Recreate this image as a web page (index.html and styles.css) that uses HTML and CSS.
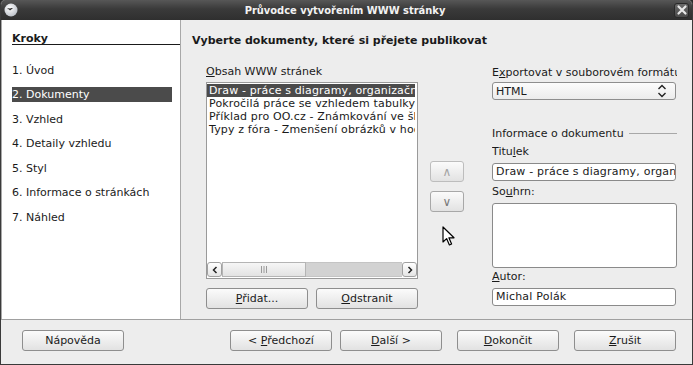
FILE: index.html
```html
<!DOCTYPE html>
<html lang="cs">
<head>
    <meta charset="UTF-8">
    <title>Průvodce vytvořením WWW stránky</title>
    <link rel="stylesheet" href="styles.css">
</head>
<body>
    <div class="window">
        <div class="titlebar">
            <svg class="app-icon" width="14" height="14" viewBox="0 0 14 14">
                <defs>
                    <radialGradient id="ball" cx="0.4" cy="0.35" r="0.7">
                        <stop offset="0" stop-color="#ffffff"/>
                        <stop offset="1" stop-color="#b9bec6"/>
                    </radialGradient>
                </defs>
                <circle cx="7" cy="7" r="6.5" fill="url(#ball)"/>
                <path d="M3 6 Q4.5 4.5 6 5.6 Q7.5 4.5 9 5.2 L7.2 6.4 L6 7.4 L4.8 6.3 Z" fill="#2a2a2a"/>
            </svg>
            <span class="title">Průvodce vytvořením WWW stránky</span>
            <span class="close">
                <svg width="12" height="12" viewBox="0 0 12 12">
                    <path d="M2.5 2.5 L9.5 9.5 M9.5 2.5 L2.5 9.5" stroke="#e8e8e8" stroke-width="2.2" stroke-linecap="round"/>
                </svg>
            </span>
        </div>

        <div class="main">
            <aside class="steps">
                <div class="steps-title">Kroky</div>
                <ul class="step-list">
                    <li>1. Úvod</li>
                    <li class="current">2. Dokumenty</li>
                    <li>3. Vzhled</li>
                    <li>4. Detaily vzhledu</li>
                    <li>5. Styl</li>
                    <li>6. Informace o stránkách</li>
                    <li>7. Náhled</li>
                </ul>
            </aside>

            <section class="page">
                <h2 class="page-title">Vyberte dokumenty, které si přejete publikovat</h2>

                <div class="columns">
                    <div class="col-list">
                        <div class="label"><u>O</u>bsah WWW stránek</div>
                        <div class="listbox">
                            <ul class="doc-list">
                                <li class="selected">Draw - práce s diagramy, organizačními diagramy</li>
                                <li>Pokročilá práce se vzhledem tabulky</li>
                                <li>Příklad pro OO.cz - Známkování ve školách</li>
                                <li>Typy z fóra - Zmenšení obrázků v hodnocení</li>
                            </ul>
                            <div class="hscroll">
                                <span class="scroll-btn">
                                    <svg width="6" height="8" viewBox="0 0 6 8"><path d="M4.5 1 L1.5 4 L4.5 7" fill="none" stroke="#222" stroke-width="1.5"/></svg>
                                </span>
                                <span class="scroll-thumb">
                                    <svg width="8" height="7" viewBox="0 0 8 7"><path d="M1.5 0 V7 M4 0 V7 M6.5 0 V7" stroke="#9a9a9a" stroke-width="1"/></svg>
                                </span>
                                <span class="scroll-trough"></span>
                                <span class="scroll-btn">
                                    <svg width="6" height="8" viewBox="0 0 6 8"><path d="M1.5 1 L4.5 4 L1.5 7" fill="none" stroke="#222" stroke-width="1.5"/></svg>
                                </span>
                            </div>
                        </div>
                        <div class="list-buttons">
                            <button class="btn"><u>P</u>řidat...</button>
                            <button class="btn"><u>O</u>dstranit</button>
                        </div>
                    </div>

                    <div class="col-move">
                        <button class="btn small disabled">&#8743;</button>
                        <button class="btn small">&#8744;</button>
                        <svg class="cursor" width="14" height="21" viewBox="0 0 14 21">
                            <path d="M1 1 L1 16 L4.6 12.6 L7.4 19 L9.6 18 L6.9 11.8 L12 11.8 Z" fill="#ffffff" stroke="#000000" stroke-width="1.2" stroke-linejoin="round"/>
                        </svg>
                    </div>

                    <div class="col-info">
                        <div class="label first">E<u>x</u>portovat v souborovém formátu</div>
                        <div class="select">
                            <span>HTML</span>
                            <svg width="10" height="14" viewBox="0 0 10 14"><path d="M1.5 5 L5 1.5 L8.5 5 M1.5 9 L5 12.5 L8.5 9" fill="none" stroke="#222" stroke-width="1.4"/></svg>
                        </div>
                        <div class="group-title"><span>Informace o dokumentu</span></div>
                        <div class="label">Titu<u>l</u>ek</div>
                        <div class="field">Draw - práce s diagramy, organizačními diagramy</div>
                        <div class="label">So<u>u</u>hrn:</div>
                        <div class="field area"></div>
                        <div class="label"><u>A</u>utor:</div>
                        <div class="field">Michal Polák</div>
                    </div>
                </div>
            </section>
        </div>

        <div class="footer">
            <button class="btn">Nápověda</button>
            <div class="nav-buttons">
                <button class="btn">&lt; <u>P</u>ředchozí</button>
                <button class="btn"><u>D</u>alší &gt;</button>
                <button class="btn wide-gap"><u>D</u>okončit</button>
                <button class="btn wide-gap"><u>Z</u>rušit</button>
            </div>
        </div>
    </div>
</body>
</html>
```

FILE: styles.css
```css
:root {
    --window-bg: #ededed;
    --border-color: #8e8e8e;
    --text-color: #1a1a1a;
    --selection-bg: #4b4b4b;
}

* {
    margin: 0;
    padding: 0;
    box-sizing: border-box;
}

body {
    background-color: #2b2b2b;
    font-family: 'DejaVu Sans', sans-serif;
    font-size: 11px;
    line-height: 15px;
    color: var(--text-color);
}

.window {
    width: 693px;
    height: 365px;
    background-color: var(--window-bg);
    border: 1px solid #3a3a3a;
    border-top: none;
    border-radius: 5px 5px 0 0;
    overflow: hidden;
    display: flex;
    flex-direction: column;
}

/* title bar */
.titlebar {
    height: 20px;
    flex: none;
    display: flex;
    align-items: center;
    padding: 0 3px 0 3px;
    background: linear-gradient(#575757, #3a3a3a 45%, #2f2f2f);
    color: #f2f2f2;
}

.app-icon {
    flex: none;
}

.title {
    flex: 1;
    text-align: center;
    font-family: 'DejaVu Sans Condensed', 'DejaVu Sans', sans-serif;
    font-weight: bold;
    font-size: 11px;
    padding-right: 2px;
}

.close {
    width: 15px;
    height: 15px;
    border-radius: 3px;
    background: linear-gradient(#6a6a6a, #4a4a4a);
    border: 1px solid #2a2a2a;
    display: flex;
    align-items: center;
    justify-content: center;
}

/* main area */
.main {
    height: 299px;
    flex: none;
    display: flex;
}

.steps {
    width: 180px;
    flex: none;
    background-color: white;
    border-left: 1px solid #a8a8a8;
    border-right: 1px solid #a8a8a8;
    padding: 13px 8px 0 10px;
}

.steps-title {
    font-weight: bold;
    line-height: 11px;
    margin-right: -8px;
    border-bottom: 1px solid #1a1a1a;
}

.step-list {
    list-style: none;
    margin-top: 17.5px;
}

.step-list li {
    height: 15px;
    line-height: 15px;
    margin-bottom: 9.5px;
}

.step-list li.current {
    background-color: var(--selection-bg);
    color: white;
}

.page {
    flex: 1;
    padding: 13px 0 0 11px;
}

.page-title {
    font-size: 11px;
    font-weight: bold;
    line-height: 15px;
}

.columns {
    display: flex;
    margin-top: 16px;
    margin-left: 14px;
}

.label {
    line-height: 15px;
    white-space: nowrap;
    overflow: hidden;
}

/* document list */
.col-list {
    width: 212px;
    flex: none;
}

.listbox {
    margin-top: 3px;
    height: 197px;
    background-color: white;
    border: 1px solid #9a9a9a;
    display: flex;
    flex-direction: column;
}

.doc-list {
    list-style: none;
    flex: 1;
    padding-top: 1px;
    overflow: hidden;
}

.doc-list li {
    height: 13px;
    line-height: 13px;
    padding-left: 2px;
    margin-right: 2px;
    letter-spacing: 0.15px;
    white-space: nowrap;
    overflow: hidden;
}

.doc-list li.selected {
    background-color: var(--selection-bg);
    color: white;
}

.hscroll {
    height: 15px;
    display: flex;
    margin: 0 0 1px 0;
}

.scroll-btn {
    width: 15px;
    flex: none;
    border: 1px solid #a0a0a0;
    border-radius: 3px;
    background: linear-gradient(#ffffff, #e4e4e4);
    display: flex;
    align-items: center;
    justify-content: center;
}

.scroll-thumb {
    width: 84px;
    flex: none;
    border: 1px solid #b4b4b4;
    background: linear-gradient(#f6f6f6, #e2e2e2);
    display: flex;
    align-items: center;
    justify-content: center;
}

.scroll-trough {
    flex: 1;
    background-color: #d2d2d2;
    border-top: 1px solid #c4c4c4;
    border-bottom: 1px solid #c4c4c4;
}

.list-buttons {
    display: flex;
    justify-content: space-between;
    margin-top: 9px;
}

.btn {
    width: 102px;
    height: 21px;
    font-family: 'DejaVu Sans', sans-serif;
    font-size: 11px;
    color: var(--text-color);
    border: 1px solid var(--border-color);
    border-radius: 3px;
    background: linear-gradient(#fbfbfb, #ececec 60%, #e2e2e2);
}

/* move up / down */
.col-move {
    width: 34px;
    flex: none;
    margin-left: 12px;
    padding-top: 97px;
    display: flex;
    flex-direction: column;
    gap: 9px;
    position: relative;
}

.btn.small {
    width: 34px;
    font-size: 12px;
    color: #7a7a7a;
    border-color: #a8a8a8;
}

.btn.small.disabled {
    color: #a4a4a4;
    border-color: #bdbdbd;
}

.cursor {
    position: absolute;
    left: 12px;
    top: 162px;
}

/* document info */
.col-info {
    width: 185px;
    flex: none;
    margin-left: 28px;
    overflow: hidden;
}

.label.first {
    padding-top: 1px;
    width: 185px;
}

.select {
    margin-top: 2px;
    width: 184px;
    height: 18px;
    border: 1px solid var(--border-color);
    border-radius: 3px;
    background: linear-gradient(#fcfcfc, #ececec);
    display: flex;
    align-items: center;
    justify-content: space-between;
    padding: 0 8px 0 3px;
}

.group-title {
    margin-top: 25.5px;
    display: flex;
    align-items: center;
    gap: 5px;
    white-space: nowrap;
}

.group-title::after {
    content: "";
    flex: 1;
    height: 1px;
    background-color: #a8a8a8;
}

.group-title + .label {
    margin-top: 3px;
}

.field {
    margin-top: 4px;
    width: 184px;
    height: 18px;
    background-color: white;
    border: 1px solid #8a8a8a;
    border-radius: 3px;
    padding: 0 3px;
    line-height: 16px;
    letter-spacing: 0.2px;
    white-space: nowrap;
    overflow: hidden;
}

.field + .label {
    margin-top: 3.5px;
}

.field.area {
    width: 185px;
    height: 65px;
    margin-top: 3.5px;
}

.field.area + .label {
    margin-top: 1.5px;
}

/* footer */
.footer {
    flex: 1;
    border-top: 1px solid #a0a0a0;
    display: flex;
    justify-content: space-between;
    padding: 10px 16px 0 21px;
}

.nav-buttons {
    display: flex;
    gap: 8px;
}

.nav-buttons .wide-gap {
    margin-left: 7px;
}
```
